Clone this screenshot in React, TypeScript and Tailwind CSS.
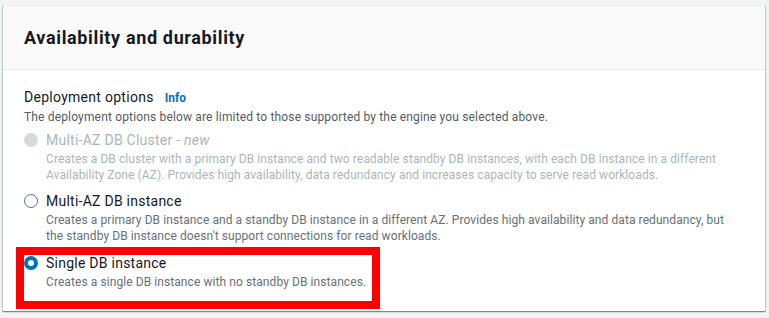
const FONT = "font-['Roboto','Liberation_Sans',sans-serif]";

type Option = {
  label: React.ReactNode;
  desc: string;
  state: "disabled" | "off" | "on";
};

function Radio({ state }: { state: Option["state"] }) {
  if (state === "disabled") return <span className="block w-[14px] h-[14px] rounded-full bg-[#d5dbdb]" />;
  if (state === "on") return <span className="block w-[14px] h-[14px] rounded-full border-[4px] border-[#0073bb] bg-white" />;
  return <span className="block w-[14px] h-[14px] rounded-full border-[1.5px] border-[#687078] bg-white" />;
}

function Choice({ opt }: { opt: Option }) {
  const muted = opt.state === "disabled";
  return (
    <div className="flex gap-2">
      <div className="h-[20px] flex items-center shrink-0">
        <Radio state={opt.state} />
      </div>
      <div className="min-w-0">
        <div className={`text-[14px] leading-[20px] tracking-[0.25px] ${muted ? "text-[#aab7b8]" : "text-[#16191f]"}`}>{opt.label}</div>
        <p className={`mt-px text-[12px] leading-4 tracking-[0.08px] ${muted ? "text-[#aab7b8]" : "text-[#687078]"}`}>{opt.desc}</p>
      </div>
    </div>
  );
}

export default function App() {
  const cluster: Option = {
    state: "disabled",
    label: (
      <>
        Multi-AZ DB Cluster - <i>new</i>
      </>
    ),
    desc: "Creates a DB cluster with a primary DB instance and two readable standby DB instances, with each DB instance in a different Availability Zone (AZ). Provides high availability, data redundancy and increases capacity to serve read workloads.",
  };
  const multi: Option = {
    state: "off",
    label: "Multi-AZ DB instance",
    desc: "Creates a primary DB instance and a standby DB instance in a different AZ. Provides high availability and data redundancy, but the standby DB instance doesn't support connections for read workloads.",
  };

  return (
    <div className={`w-[769px] h-[318px] bg-[#f2f3f3] pt-[5px] pl-[3px] pr-[4px] ${FONT}`}>
      <div className="bg-white border-t border-[#eaeded] shadow-[0_1px_1px_0_rgba(0,28,36,0.3),1px_1px_1px_0_rgba(0,28,36,0.15),-1px_1px_1px_0_rgba(0,28,36,0.15)]">
        <div className="h-[64px] bg-[#fafafa] border-b border-[#eaeded] flex items-center px-[21px]">
          <h2 className="text-[18px] font-bold text-[#16191f] leading-[22px] tracking-[0.65px]">Availability and durability</h2>
        </div>

        <div className="pl-[21px] pr-[21px] pt-[17px] pb-[2px]">
          <div className="flex items-baseline gap-[11px] leading-[20px]">
            <span className="text-[14px] text-[#16191f] tracking-[0.28px]">Deployment options</span>
            <span className="text-[12px] font-bold text-[#0073bb]">Info</span>
          </div>
          <p className="mt-px text-[12px] leading-4 tracking-[0.16px] text-[#545b64]">
            The deployment options below are limited to those supported by the engine you selected above.
          </p>

          <div className="mt-[5px]">
            <Choice opt={cluster} />
          </div>
          <div className="mt-[8px]">
            <Choice opt={multi} />
          </div>

          <div className="mt-[3px] -ml-2 w-[364px] border-8 border-[#ff0000] pb-[11px]">
            <div className="-mt-[2px]">
              <Choice opt={{ state: "on", label: "Single DB instance", desc: "Creates a single DB instance with no standby DB instances." }} />
            </div>
          </div>
        </div>
      </div>
    </div>
  );
}
